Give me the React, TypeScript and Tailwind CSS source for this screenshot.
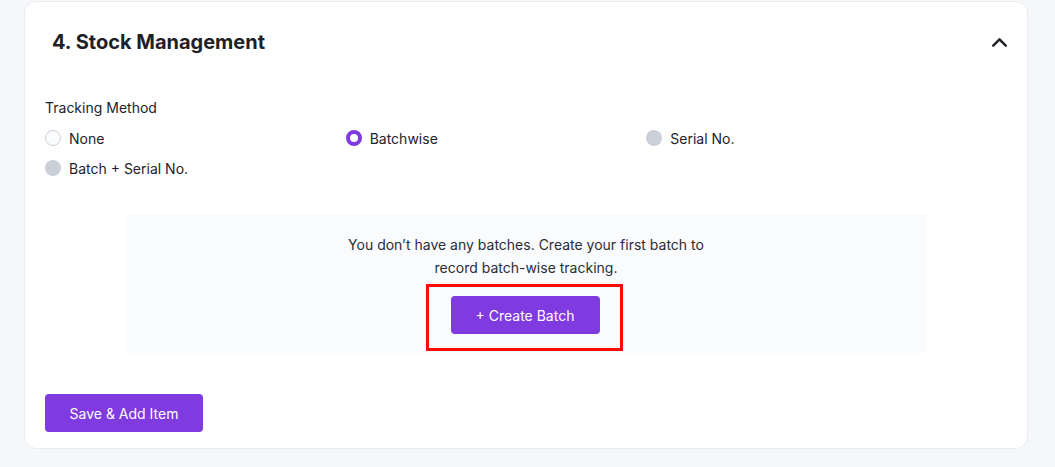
import { ChevronUp } from "lucide-react";

const OPTIONS = [
  { label: "None", state: "off" },
  { label: "Batchwise", state: "on" },
  { label: "Serial No.", state: "disabled" },
  { label: "Batch + Serial No.", state: "disabled" },
];

function Radio({ state }: { state: string }) {
  if (state === "on")
    return <span className="h-4 w-4 rounded-full border-[4px] border-[#7f3ae0] bg-white" />;
  if (state === "disabled")
    return <span className="h-4 w-4 rounded-full bg-[#cbcfd8]" />;
  return <span className="h-4 w-4 rounded-full border border-[#cdd1d8] bg-[#fbfcfe]" />;
}

export default function App() {
  return (
    <div
      className="h-[467px] bg-[#f6f7f9] px-[24px] pt-px text-[#20232b]"
      style={{ fontFamily: "Inter, 'Noto Sans', sans-serif" }}
    >
      <div className="w-[1004px] rounded-xl border border-[#e9ecf0] bg-white">
        <div className="flex items-center justify-between pl-[27px] pr-[15px] pt-[26px]">
          <h2 className="text-[20px] font-bold leading-7 text-[#1e1f28]">4. Stock Management</h2>
          <ChevronUp className="h-[25px] w-[25px] text-[#22242c]" strokeWidth={2.4} />
        </div>

        <div className="px-5 pb-4">
          <p className="mt-[42px] text-[14px] leading-5">Tracking Method</p>
          <div className="mt-[5px] grid w-[902px] grid-cols-3">
            {OPTIONS.map((o) => (
              <label key={o.label} className="flex h-[30px] items-center gap-2 text-[14px]">
                <Radio state={o.state} />
                <span>{o.label}</span>
              </label>
            ))}
          </div>

          <div className="mx-auto mt-[31px] flex w-[800px] flex-col items-center bg-[#fafbfd] pb-[2px] pt-[19px]">
            <p className="text-center text-[14px] leading-[23px] text-[#2a2d35]">
              You don’t have any batches. Create your first batch to
              <br />
              record batch-wise tracking.
            </p>
            <div className="mr-[4px] mt-[5px] border-[3px] border-[#ff0a0a] pb-[14px] pl-[22px] pr-[20px] pt-[9px]">
              <button className="h-[38px] w-[149px] rounded bg-[#7f3ae0] text-[14px] text-white">
                + Create Batch
              </button>
            </div>
          </div>

          <button className="mt-[41px] h-[38px] w-[158px] rounded bg-[#7f3ae0] text-[14px] text-white">
            Save &amp; Add Item
          </button>
        </div>
      </div>
    </div>
  );
}
